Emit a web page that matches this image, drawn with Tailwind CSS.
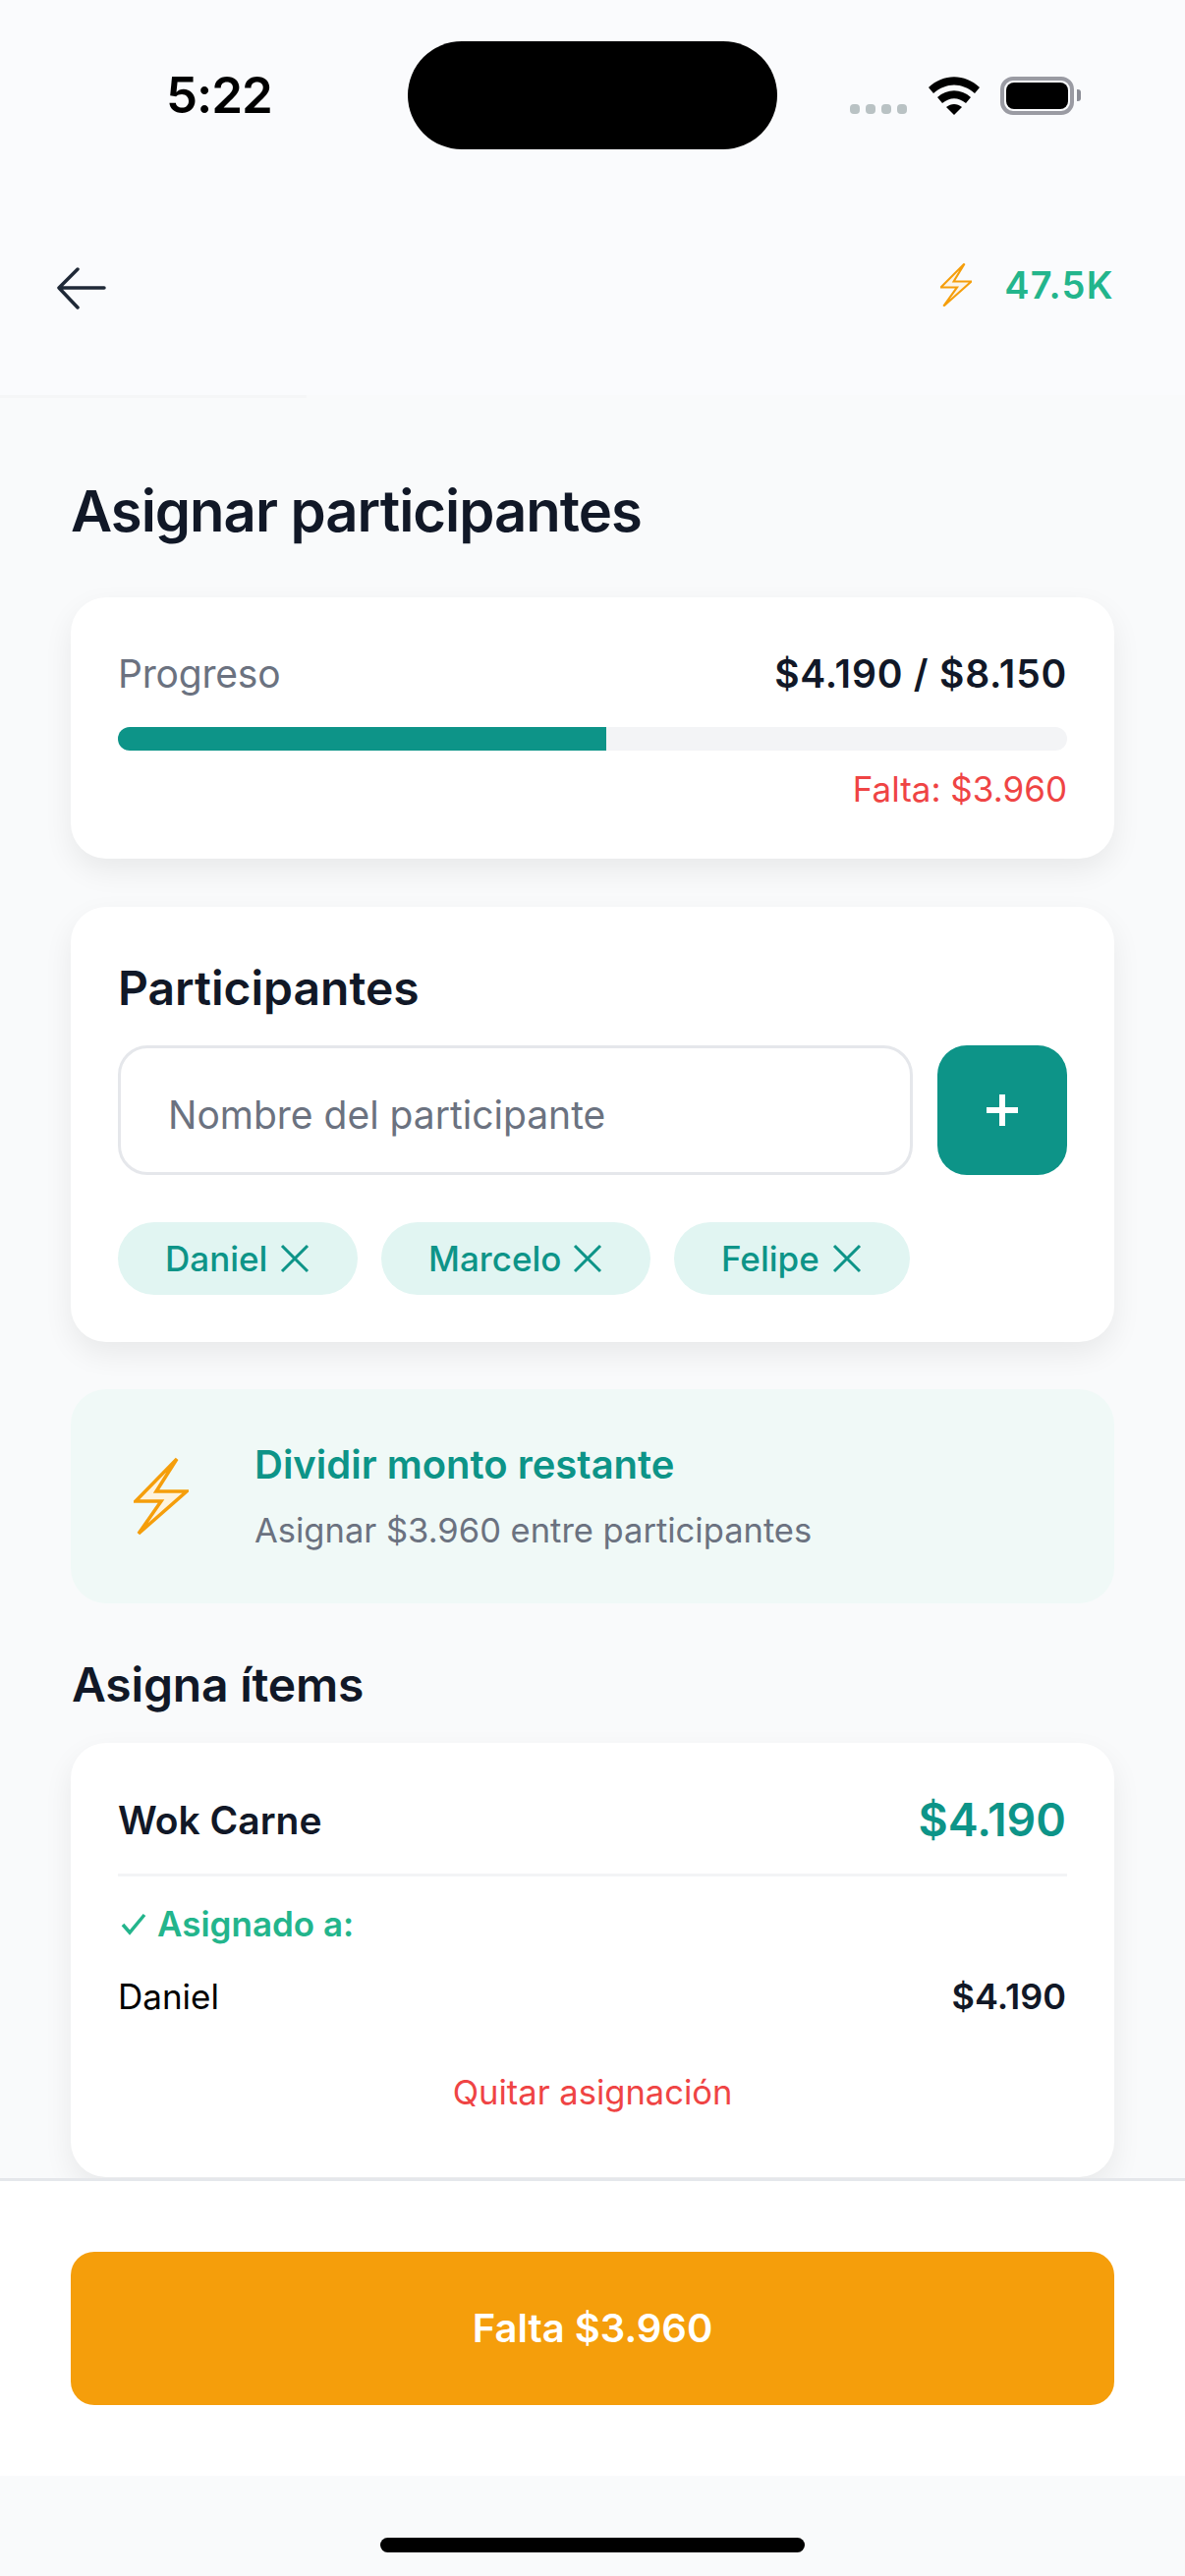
<!DOCTYPE html>
<html lang="es">
<head>
<meta charset="utf-8">
<script src="https://cdn.jsdelivr.net/npm/@tailwindcss/browser@4"></script>
</head>
<body class="m-0">
<div class="w-[1206px] h-[2622px] bg-[#f9fafb] flex flex-col overflow-hidden font-['Inter',sans-serif] text-[#111827]">
  <!-- status bar -->
  <div class="relative h-[176px] shrink-0 bg-[#fafbfd]">
    <div class="absolute left-[169px] top-[66px] text-[51px] leading-[62px] font-semibold tracking-[-1px] text-black">5:22</div>
    <div class="absolute left-[415px] top-[42px] w-[376px] h-[110px] rounded-[55px] bg-black"></div>
    <div class="absolute left-[865px] top-[106px] flex gap-[6px]">
      <span class="w-[10px] h-[10px] rounded-[4px] bg-[#b9c2c4]"></span>
      <span class="w-[10px] h-[10px] rounded-[4px] bg-[#b9c2c4]"></span>
      <span class="w-[10px] h-[10px] rounded-[4px] bg-[#b9c2c4]"></span>
      <span class="w-[10px] h-[10px] rounded-[4px] bg-[#b9c2c4]"></span>
    </div>
    <svg class="absolute left-[945px] top-[78px]" width="52" height="39" viewBox="0 0 52 39" fill="#000">
      <path d="M0 11 C15 -3.5 37 -3.5 52 11 L47 17 C34 5.5 18 5.5 5 17 Z"/>
      <path d="M9 21 C19 12 33 12 43 21 L38 27 C30 20.5 22 20.5 14 27 Z"/>
      <path d="M18 31 C23 27 29 27 34 31 L26 39 Z"/>
    </svg>
    <div class="absolute left-[1018px] top-[78px] w-[75px] h-[39px] rounded-[13px] border-[4px] border-[#9a9ba3] p-[2px]">
      <div class="w-full h-full rounded-[8px] bg-black"></div>
    </div>
    <div class="absolute left-[1096px] top-[91px] w-[4px] h-[12px] rounded-r-[3px] bg-[#8b8d96]"></div>
  </div>
  <!-- header -->
  <div class="h-[226px] shrink-0 bg-[#fafbfd] relative flex items-start justify-between pl-[58px] pr-[72px]">
    <svg class="mt-[96px]" width="52" height="44" viewBox="0 0 52 44" fill="none" stroke="#1f2937" stroke-width="3.5" stroke-linecap="round" stroke-linejoin="round">
      <path d="M48 21 H2 M21 2 L2 21 L21 41"/>
    </svg>
    <div class="flex items-center mt-[91px] gap-[33px]">
      <svg width="32" height="44" viewBox="-1 -1 92 128" fill="#fde7c0" fill-opacity=".35" stroke="#f59e0b" stroke-width="6" stroke-linejoin="miter">
        <path d="M70 0 L0 70 H48 L8 126 L90 53 H38 Z"/>
      </svg>
      <span class="text-[38px] leading-[46px] font-semibold text-[#23b58c] tracking-[1.4px]">47.5K</span>
    </div>
    <div class="absolute left-0 bottom-[-3px] w-[312px] h-[3px] bg-[#f5f6f7]"></div>
  </div>
  <!-- content -->
  <main class="flex-1 min-h-0 overflow-hidden px-[72px] pt-[82px] relative">
    <h1 class="text-[58px] leading-[72px] font-semibold text-[#111827] tracking-[-1px] m-0">Asignar participantes</h1>
    <!-- progress -->
    <section class="mt-[52px] h-[266px] rounded-[36px] bg-white shadow-[0_12px_30px_rgba(0,0,0,0.07)] px-[48px] pt-[54px]">
      <div class="flex justify-between items-center h-[48px]">
        <span class="text-[39px] text-[#6b7280] leading-[48px] tracking-[-0.2px]">Progreso</span>
        <span class="text-[39px] font-semibold text-[#111827] leading-[48px] tracking-[0.8px]">$4.190 / $8.150</span>
      </div>
      <div class="mt-[30px] h-[24px] rounded-full bg-[#f3f4f6] overflow-hidden">
        <div class="h-full bg-[#0d9488]" style="width:51.4%"></div>
      </div>
      <div class="mt-[18px] text-right text-[35px] leading-[42px] text-[#ef4444]">Falta: $3.960</div>
    </section>
    <!-- participants -->
    <section class="mt-[49px] h-[443px] rounded-[36px] bg-white shadow-[0_12px_30px_rgba(0,0,0,0.07)] px-[48px] pt-[54px]">
      <h2 class="text-[48px] leading-[58px] font-semibold m-0">Participantes</h2>
      <div class="mt-[29px] flex gap-[25px]">
        <div class="w-[809px] h-[132px] rounded-[30px] border-[3px] border-[#e5e7eb] flex items-center pl-[48px] pt-[10px] text-[39px] text-[#6b7280]">Nombre del participante</div>
        <div class="w-[132px] h-[132px] rounded-[30px] bg-[#0d9488] flex items-center justify-center">
          <svg width="34" height="34" viewBox="0 0 34 34" stroke="#fff" stroke-width="6" fill="none"><path d="M17 1 V33 M1 17 H33"/></svg>
        </div>
      </div>
      <div class="mt-[48px] flex gap-[24px]">
        <div class="h-[74px] w-[244px] rounded-full bg-[#e1f5f2] flex items-center pl-[48px] gap-[13px] text-[35px] font-medium text-[#0d9488]">
          <span>Daniel</span>
          <svg width="30" height="30" viewBox="0 0 30 30" stroke="#0d9488" stroke-width="3" fill="none"><path d="M2 2 L28 28 M28 2 L2 28"/></svg>
        </div>
        <div class="h-[74px] w-[274px] rounded-full bg-[#e1f5f2] flex items-center pl-[48px] gap-[12px] text-[35px] font-medium text-[#0d9488]">
          <span>Marcelo</span>
          <svg width="30" height="30" viewBox="0 0 30 30" stroke="#0d9488" stroke-width="3" fill="none"><path d="M2 2 L28 28 M28 2 L2 28"/></svg>
        </div>
        <div class="h-[74px] w-[240px] rounded-full bg-[#e1f5f2] flex items-center pl-[48px] gap-[13px] text-[35px] font-medium text-[#0d9488]">
          <span>Felipe</span>
          <svg width="30" height="30" viewBox="0 0 30 30" stroke="#0d9488" stroke-width="3" fill="none"><path d="M2 2 L28 28 M28 2 L2 28"/></svg>
        </div>
      </div>
    </section>
    <!-- split -->
    <section class="mt-[48px] h-[218px] rounded-[36px] bg-[#f0f9f7] flex items-center pl-[64px] gap-[67px]">
      <svg width="56" height="80" viewBox="0 0 56 80" fill="#fdf3df" stroke="#f59e0b" stroke-width="3.5" stroke-linejoin="miter">
        <path d="M44 2 L2 45 H28 L5 78 L54 35 H23 Z"/>
      </svg>
      <div class="flex flex-col">
        <div class="text-[40px] leading-[48px] font-semibold text-[#0d9488]">Dividir monto restante</div>
        <div class="mt-[22px] text-[34.5px] leading-[42px] text-[#6b7280]">Asignar $3.960 entre participantes</div>
      </div>
    </section>
    <h2 class="mt-[54px] ml-[1px] text-[48px] leading-[58px] font-semibold tracking-[-0.2px] m-0">Asigna ítems</h2>
    <!-- item -->
    <section class="mt-[30px] h-[442px] rounded-[36px] bg-white shadow-[0_12px_30px_rgba(0,0,0,0.07)] px-[48px] pt-[54px]">
      <div class="flex justify-between items-center h-[50px]">
        <span class="text-[39px] font-semibold">Wok Carne</span>
        <span class="text-[46.5px] font-semibold text-[#0d9488] mr-[1px]">$4.190</span>
      </div>
      <div class="mt-[29px] h-[3px] bg-[#f3f4f6]"></div>
      <div class="mt-[27px] ml-[2px] flex items-center gap-[10px] text-[35px] leading-[42px] font-semibold text-[#23b58c]">
        <svg width="28" height="24" viewBox="0 0 28 24" fill="none" stroke="#23b58c" stroke-width="3.5"><path d="M3 13 L10 21 L25 3"/></svg>
        <span>Asignado a:</span>
      </div>
      <div class="mt-[32px] flex justify-between items-center h-[42px] text-[35px]">
        <span class="text-black">Daniel</span>
        <span class="font-semibold text-[36px] mr-[1px]">$4.190</span>
      </div>
      <div class="mt-[56px] text-center text-[34.5px] leading-[42px] text-[#ef4444]">Quitar asignación</div>
    </section>
  </main>
  <!-- footer -->
  <footer class="h-[303px] shrink-0 bg-white border-t-[3px] border-[#e5e7eb] px-[72px] pt-[72px]">
    <div class="h-[156px] rounded-[24px] bg-[#f59e0b] flex items-center justify-center text-[40px] font-semibold text-white">Falta $3.960</div>
  </footer>
  <div class="h-[102px] shrink-0 bg-[#f9fafb] flex justify-center pt-[63px]">
    <div class="w-[432px] h-[15px] rounded-full bg-black"></div>
  </div>
</div>
</body>
</html>
